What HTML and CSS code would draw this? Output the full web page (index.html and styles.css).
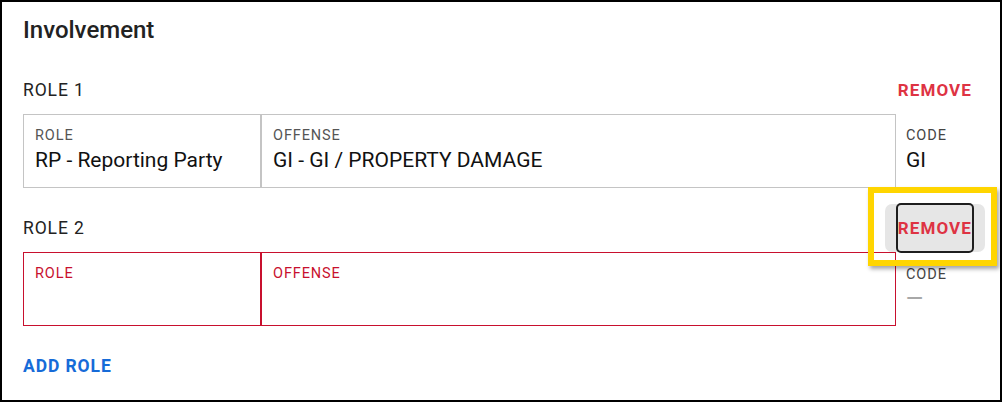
FILE: index.html
```html
<!DOCTYPE html>
<html lang="en">
<head>
<meta charset="utf-8">
<title>Involvement</title>
<link rel="stylesheet" href="styles.css">
</head>
<body>
<div class="card">
  <h2 class="title">Involvement</h2>
  <div class="roles">
    <section class="role">
      <div class="role-head">
        <span class="role-name">ROLE 1</span>
        <button class="remove" type="button">REMOVE</button>
      </div>
      <div class="role-row">
        <div class="fields">
          <div class="field field-role">
            <div class="label">ROLE</div>
            <div class="value">RP - Reporting Party</div>
          </div>
          <div class="field field-offense">
            <div class="label">OFFENSE</div>
            <div class="value">GI - GI / PROPERTY DAMAGE</div>
          </div>
        </div>
        <div class="code">
          <div class="label">CODE</div>
          <div class="value">GI</div>
        </div>
      </div>
    </section>
    <section class="role role-invalid">
      <div class="role-head">
        <span class="role-name">ROLE 2</span>
        <button class="remove remove-focus" type="button">REMOVE<span class="highlight"></span></button>
      </div>
      <div class="role-row">
        <div class="fields">
          <div class="field field-role">
            <div class="label">ROLE</div>
            <div class="value"></div>
          </div>
          <div class="field field-offense">
            <div class="label">OFFENSE</div>
            <div class="value"></div>
          </div>
        </div>
        <div class="code code-shifted">
          <div class="label">CODE</div>
          <div class="value"><span class="dash">—</span></div>
        </div>
      </div>
    </section>
  </div>
  <button class="add" type="button">ADD ROLE</button>
</div>
</body>
</html>
```
FILE: styles.css
```css
* { box-sizing: border-box; }
html, body {
  margin: 0;
  padding: 0;
  background: #fff;
}
body {
  font-family: Roboto, "Liberation Sans", Arial, sans-serif;
  color: #222;
}
.card {
  width: 1002px;
  height: 402px;
  border: 2px solid #000;
  padding: 16px 15px 0 21px;
  background: #fff;
}
.title {
  margin: 0;
  font-size: 24px;
  line-height: 24px;
  font-weight: 500;
  color: #222;
}
.roles {
  margin-top: 24px;
  display: flex;
  flex-direction: column;
  gap: 16px;
}
.role-head {
  height: 48px;
  display: flex;
  align-items: center;
  justify-content: space-between;
}
.role-name {
  font-size: 17.5px;
  letter-spacing: 0.9px;
  color: #222;
}
.remove {
  position: relative;
  height: 48px;
  padding: 0 13px;
  border: 0;
  border-radius: 7px;
  background: transparent;
  font-family: inherit;
  font-size: 17px;
  font-weight: 700;
  letter-spacing: 1.1px;
  color: #de3343;
  cursor: pointer;
}
.remove-focus {
  background: #e6e6e6;
}
.remove-focus::before {
  content: "";
  position: absolute;
  left: 11px;
  right: 11px;
  top: -1px;
  bottom: -1px;
  border: 2px solid #1e1e1e;
  border-radius: 5px;
}
.highlight {
  position: absolute;
  left: -17px;
  right: -12px;
  top: -17px;
  bottom: -14px;
  border: 6px solid #ffd500;
  box-shadow: 2px 3px 4px rgba(0, 0, 0, 0.35);
  pointer-events: none;
}
.role-row {
  display: flex;
}
.fields {
  flex: 1;
  display: flex;
}
.field {
  border: 1px solid #c4c4c4;
  padding: 12px 11px 14px;
}
.field-role {
  width: 238px;
}
.field-offense {
  flex: 1;
}
.label {
  font-size: 14.5px;
  line-height: 18px;
  letter-spacing: 0.9px;
  color: #555;
}
.value {
  margin-top: 2px;
  font-size: 21px;
  line-height: 26px;
  min-height: 26px;
  color: #111;
}
.role-invalid .field {
  border-color: #c8102e;
}
.role-invalid .field .label {
  color: #c8102e;
}
.code {
  width: 89px;
  padding: 13px 0 0 10px;
}
.code .label {
  color: #444;
}
.code-shifted {
  padding-top: 14px;
}
.dash {
  font-size: 22px;
  font-weight: 500;
  color: #a8a8a8;
}
.add {
  margin-top: 30px;
  padding: 0;
  border: 0;
  background: none;
  font-family: inherit;
  font-size: 17.5px;
  line-height: 20px;
  font-weight: 700;
  letter-spacing: 0.9px;
  color: #166bd8;
  cursor: pointer;
}
```
